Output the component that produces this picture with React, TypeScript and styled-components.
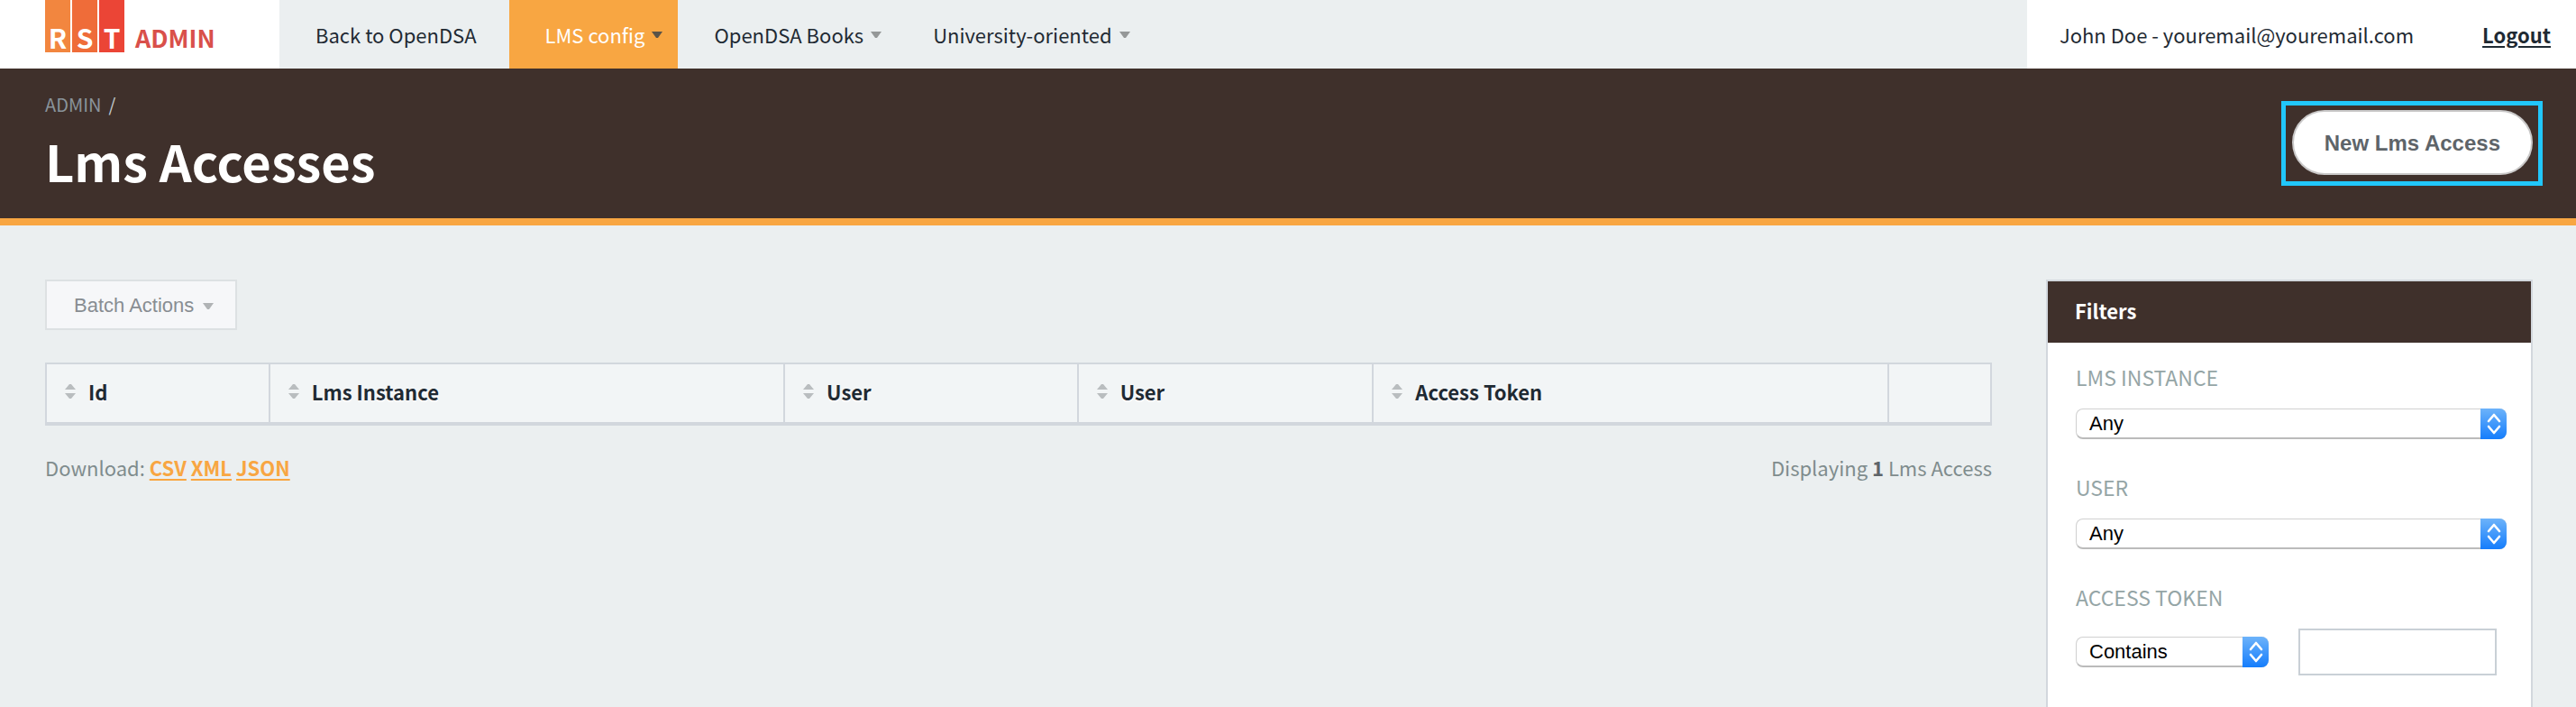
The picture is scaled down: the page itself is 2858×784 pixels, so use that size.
import React from "react";
import styled, { createGlobalStyle } from "styled-components";

const sans = `"Noto Sans CJK SC", "Noto Sans", sans-serif`;
const system = `"Liberation Sans", Arial, sans-serif`;

const color = {
  page: "#ebeff0",
  brown: "#3f302b",
  orange: "#f8a642",
  ink: "#1f2a33",
  muted: "#7f8c8d",
  label: "#95a5a6",
  line: "#d2d7dd",
};

const GlobalStyle = createGlobalStyle`
  * { box-sizing: border-box; }
  body {
    margin: 0;
    background: ${color.page};
    color: ${color.ink};
    font-family: ${sans};
    font-size: 22px;
    line-height: 32px;
  }
`;

const Page = styled.div`
  display: flex;
  flex-direction: column;
  min-height: 100vh;
`;

const TopBar = styled.header`
  display: flex;
  height: 76px;
`;

const Brand = styled.a`
  display: flex;
  gap: 12px;
  flex: none;
  width: 310px;
  padding-left: 50px;
  background: #fff;
  text-decoration: none;
`;

const BrandTiles = styled.span`
  display: flex;
  gap: 2px;
  height: 58px;
`;

const BrandTile = styled.span<{ $fill: string }>`
  display: flex;
  align-items: flex-end;
  justify-content: center;
  width: 28px;
  background: ${(p) => p.$fill};
  color: #fff;
  font-size: 30px;
  font-weight: 700;
  line-height: 34px;
`;

const BrandName = styled.span`
  display: flex;
  align-items: flex-end;
  height: 58px;
  color: #d9504a;
  font-size: 27px;
  font-weight: 700;
  line-height: 32px;
`;

const Nav = styled.nav`
  display: flex;
  flex: 1;
`;

const NavLink = styled.a<{ $active?: boolean; $menu?: boolean }>`
  display: flex;
  align-items: center;
  gap: 8px;
  padding: 0 ${(p) => (p.$menu ? 17 : 36)}px 0 40px;
  background: ${(p) => (p.$active ? color.orange : "transparent")};
  color: ${(p) => (p.$active ? "#fff" : color.ink)};
  text-decoration: none;
  white-space: nowrap;
`;

const Account = styled.div`
  display: flex;
  align-items: center;
  gap: 76px;
  padding: 0 28px 0 36px;
  background: #fff;
  white-space: nowrap;
`;

const Logout = styled.a`
  color: ${color.ink};
  font-weight: 700;
  text-underline-offset: 3px;
  text-decoration-thickness: 2px;
`;

const TitleBar = styled.section`
  display: flex;
  justify-content: space-between;
  align-items: flex-start;
  height: 174px;
  padding: 24px 37px 0 50px;
  border-bottom: 8px solid ${color.orange};
  background: ${color.brown};
`;

const Breadcrumb = styled.nav`
  display: flex;
  gap: 8px;
  color: #c3ccd0;
  font-size: 20px;
  line-height: 32px;

  a {
    color: #8a949b;
    text-decoration: none;
  }
`;

const Title = styled.h1`
  margin: 6px 0 0;
  color: #fff;
  font-size: 56px;
  font-weight: 700;
  line-height: 80px;
`;

const Highlight = styled.div`
  margin-top: 12px;
  padding: 5px 6px 7px 7px;
  border: 5px solid #21c7fb;
`;

const PillButton = styled.button`
  display: block;
  height: 72px;
  padding: 2px 34px 0;
  border: 2px solid #c9c8c8;
  border-radius: 36px;
  background: #fff;
  color: #5e6469;
  font: 700 24px/32px ${system};
`;

const Content = styled.main`
  display: flex;
  align-items: stretch;
  flex: 1;
  gap: 60px;
  padding: 60px 48px 0 50px;
`;

const Listing = styled.section`
  flex: 1;
  min-width: 0;
`;

const BatchButton = styled.button`
  display: flex;
  align-items: center;
  gap: 10px;
  height: 56px;
  padding: 2px 24px 0 30px;
  border: 2px solid #dde1e3;
  background: #f6f7f9;
  color: #888d92;
  font: 22px/28px ${system};
`;

const Table = styled.table`
  width: 100%;
  margin: 36px 0 30px;
  border-collapse: separate;
  border-spacing: 0;
  border: 2px solid ${color.line};
  border-bottom-width: 4px;
  table-layout: fixed;
`;

const HeadCell = styled.th<{ $width: string }>`
  width: ${(p) => p.$width};
  height: 64px;
  padding: 0 20px 4px;
  background: #f2f5f6;
  text-align: left;

  & + & {
    border-left: 2px solid ${color.line};
  }
`;

const SortLink = styled.a`
  display: flex;
  align-items: center;
  gap: 14px;
  color: ${color.ink};
  font-weight: 700;
  text-decoration: none;
  text-shadow: 0 2px 0 #fff;
`;

const Footer = styled.div`
  display: flex;
  justify-content: space-between;
  color: ${color.muted};

  a {
    color: ${color.orange};
    font-weight: 700;
    text-underline-offset: 3px;
    text-decoration-thickness: 2px;
  }

  b {
    color: #5e6469;
  }
`;

const Sidebar = styled.aside`
  flex: none;
  width: 540px;
  border: 2px solid ${color.line};
  border-bottom: 0;
  background: #fff;
`;

const SidebarTitle = styled.h2`
  margin: 0;
  height: 68px;
  padding: 16px 30px;
  background: ${color.brown};
  color: #fff;
  font-size: 22px;
  line-height: 32px;
`;

const FilterForm = styled.form`
  display: flex;
  flex-direction: column;
  gap: 36px;
  padding: 21px 27px 32px 31px;
`;

const Field = styled.div`
  display: flex;
  flex-direction: column;
  gap: 18px;
`;

const FieldLabel = styled.label`
  color: ${color.label};
  font-size: 23px;
  line-height: 34px;
  text-transform: uppercase;
`;

const TokenRow = styled.div`
  display: flex;
  align-items: center;
  gap: 33px;
  padding-right: 11px;
`;

const SelectFrame = styled.div<{ $width: string }>`
  position: relative;
  flex: none;
  width: ${(p) => p.$width};
  height: 34px;
`;

const Select = styled.select`
  display: block;
  appearance: none;
  width: 100%;
  height: 34px;
  padding: 0 40px 0 14px;
  border: 1px solid #d0d0d0;
  border-bottom: 2px solid #bbb;
  border-radius: 8px;
  background: #fff;
  color: #000;
  font: 22px/28px ${system};
`;

const Stepper = styled.span`
  position: absolute;
  top: 0;
  right: 0;
  display: flex;
  align-items: center;
  justify-content: center;
  width: 29px;
  height: 34px;
  border-radius: 0 8px 8px 0;
  background: linear-gradient(#6db3fa, #157dfc);
  pointer-events: none;
`;

const TextInput = styled.input`
  flex: 1;
  min-width: 0;
  height: 52px;
  padding: 0 12px;
  border: 2px solid #c9d0d6;
  background: #fff;
  font: 22px/28px ${system};
`;

const Caret = ({ fill }: { fill: string }) => (
  <svg width="12" height="7" viewBox="0 0 12 7" aria-hidden="true">
    <path d="M0 0h12L7 7H5z" fill={fill} />
  </svg>
);

const SortIcon = () => (
  <svg width="12" height="18" viewBox="0 0 12 18" aria-hidden="true">
    <path d="M5 1h2l5 6H0zM0 11h12l-5 6H5z" fill="#b9bdbf" />
  </svg>
);

const SelectBox = ({ id, value, width, label }: { id: string; value: string; width: string; label?: string }) => (
  <SelectFrame $width={width}>
    <Select id={id} defaultValue={value} aria-label={label}>
      <option>{value}</option>
    </Select>
    <Stepper>
      <svg width="16" height="24" viewBox="0 0 16 24" fill="none" stroke="#fff" strokeWidth="2.6" aria-hidden="true">
        <path d="M2 9l6-7 6 7M2 15l6 7 6-7" strokeLinecap="round" strokeLinejoin="round" />
      </svg>
    </Stepper>
  </SelectFrame>
);

const columns = [
  { name: "Id", width: "11.4%" },
  { name: "Lms Instance", width: "26.5%" },
  { name: "User", width: "15.1%" },
  { name: "User", width: "15.2%" },
  { name: "Access Token", width: "26.5%" },
];

export default function App() {
  return (
    <Page>
      <GlobalStyle />
      <TopBar>
        <Brand href="#">
          <BrandTiles>
            <BrandTile $fill="#f2863f">R</BrandTile>
            <BrandTile $fill="#ef6c39">S</BrandTile>
            <BrandTile $fill="#eb4536">T</BrandTile>
          </BrandTiles>
          <BrandName>ADMIN</BrandName>
        </Brand>
        <Nav>
          <NavLink href="#">Back to OpenDSA</NavLink>
          <NavLink href="#" $active $menu>
            LMS config <Caret fill="#5a5348" />
          </NavLink>
          <NavLink href="#" $menu>
            OpenDSA Books <Caret fill="#959898" />
          </NavLink>
          <NavLink href="#" $menu>
            University-oriented <Caret fill="#959898" />
          </NavLink>
        </Nav>
        <Account>
          <span>John Doe - youremail@youremail.com</span>
          <Logout href="#">Logout</Logout>
        </Account>
      </TopBar>

      <TitleBar>
        <div>
          <Breadcrumb>
            <a href="#">ADMIN</a>
            <span>/</span>
          </Breadcrumb>
          <Title>Lms Accesses</Title>
        </div>
        <Highlight>
          <PillButton type="button">New Lms Access</PillButton>
        </Highlight>
      </TitleBar>

      <Content>
        <Listing>
          <BatchButton type="button">
            Batch Actions <Caret fill="#b0b3b5" />
          </BatchButton>
          <Table>
            <thead>
              <tr>
                {columns.map((column, index) => (
                  <HeadCell key={index} $width={column.width} scope="col">
                    <SortLink href="#">
                      <SortIcon />
                      {column.name}
                    </SortLink>
                  </HeadCell>
                ))}
                <HeadCell $width="auto" />
              </tr>
            </thead>
          </Table>
          <Footer>
            <span>
              Download: <a href="#">CSV</a> <a href="#">XML</a> <a href="#">JSON</a>
            </span>
            <span>
              Displaying <b>1</b> Lms Access
            </span>
          </Footer>
        </Listing>

        <Sidebar>
          <SidebarTitle>Filters</SidebarTitle>
          <FilterForm>
            <Field>
              <FieldLabel htmlFor="lms-instance">Lms Instance</FieldLabel>
              <SelectBox id="lms-instance" value="Any" width="100%" />
            </Field>
            <Field>
              <FieldLabel htmlFor="user">User</FieldLabel>
              <SelectBox id="user" value="Any" width="100%" />
            </Field>
            <Field>
              <FieldLabel htmlFor="access-token">Access Token</FieldLabel>
              <TokenRow>
                <SelectBox id="token-match" value="Contains" width="214px" label="Access token match" />
                <TextInput id="access-token" type="text" />
              </TokenRow>
            </Field>
          </FilterForm>
        </Sidebar>
      </Content>
    </Page>
  );
}
